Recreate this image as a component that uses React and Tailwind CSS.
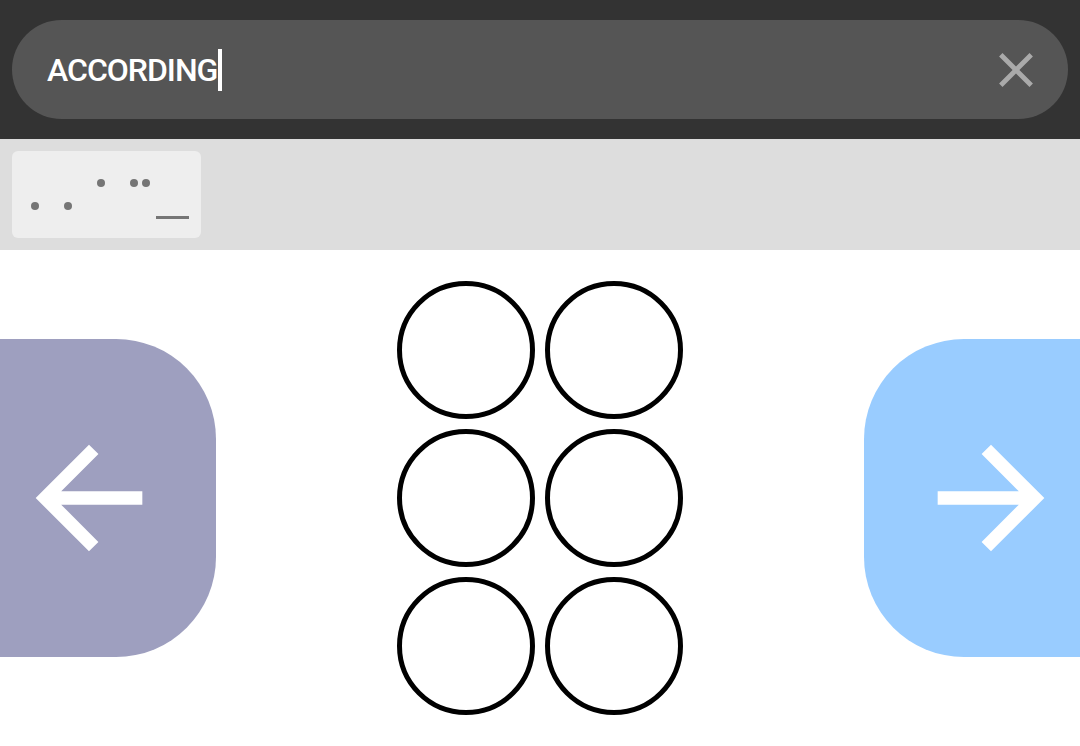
import React from 'react';

const Dot = ({ x, y }) => (
  <div
    className="absolute w-2 h-2 rounded-full bg-[#757575]"
    style={{ left: x - 4, top: y - 4 }}
  />
);

const BrailleCircle = () => (
  <div className="w-[138px] h-[138px] rounded-full border-[5px] border-black bg-white"></div>
);

const App = () => {
  return (
    <div className="w-full h-[746px] flex flex-col bg-white overflow-hidden" style={{ fontFamily: 'Roboto, "Noto Sans", sans-serif' }}>
      {/* barre de recherche */}
      <div className="h-[139px] bg-[#333333] px-3 pt-5">
        <div className="h-[99px] rounded-full bg-[#555555] flex items-center pl-[35px] pr-[23px]">
          <div className="flex-1 flex items-center">
            <span className="text-white text-[32px] font-medium leading-none tracking-[-1px]">ACCORDING</span>
            <span className="w-1 h-[42px] bg-white ml-px"></span>
          </div>
          <svg width="58" height="58" viewBox="0 0 24 24" fill="#aaaaaa">
            <path d="M19 6.41L17.59 5 12 10.59 6.41 5 5 6.41 10.59 12 5 17.59 6.41 19 12 13.41 17.59 19 19 17.59 13.41 12z" />
          </svg>
        </div>
      </div>

      {/* suggestions */}
      <div className="h-[111px] bg-[#dddddd] p-3">
        <div className="relative w-[189px] h-[87px] rounded-md bg-[#eeeeee]">
          <Dot x={89} y={32} />
          <Dot x={122} y={32} />
          <Dot x={134} y={32} />
          <Dot x={23} y={55} />
          <Dot x={56} y={55} />
          <div className="absolute left-[144px] top-[65px] w-[33px] h-[3px] bg-[#757575]"></div>
        </div>
      </div>

      {/* cellule braille + navigation */}
      <div className="flex-1 flex items-center justify-between">
        <button className="w-[216px] h-[318px] bg-[#9e9fbf] rounded-r-[100px] flex items-center pl-[9px]">
          <svg width="160" height="160" viewBox="0 0 24 24" fill="white">
            <path d="M20 11H7.83l5.59-5.59L12 4l-8 8 8 8 1.41-1.41L7.83 13H20v-2z" />
          </svg>
        </button>

        <div className="grid grid-cols-2 gap-[10px]">
          <BrailleCircle />
          <BrailleCircle />
          <BrailleCircle />
          <BrailleCircle />
          <BrailleCircle />
          <BrailleCircle />
        </div>

        <button className="w-[216px] h-[318px] bg-[#99ccff] rounded-l-[100px] flex items-center justify-end pr-[9px]">
          <svg width="160" height="160" viewBox="0 0 24 24" fill="white">
            <path d="M12 4l-1.41 1.41L16.17 11H4v2h12.17l-5.58 5.59L12 20l8-8z" />
          </svg>
        </button>
      </div>
    </div>
  );
};

export default App;
